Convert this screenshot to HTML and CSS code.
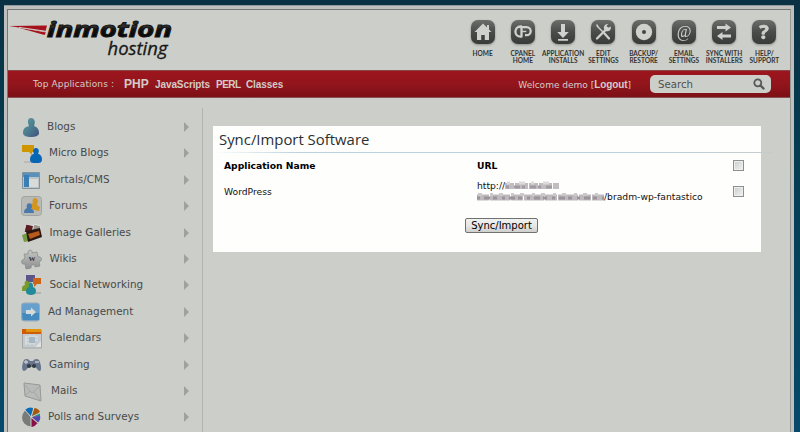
FILE: index.html
```html
<!DOCTYPE html>
<html lang="en">
<head>
<meta charset="utf-8">
<title>Sync/Import Software</title>
<link rel="stylesheet" href="styles.css">
</head>
<body>
<svg width="0" height="0" class="defs">
  <defs>
    <linearGradient id="tile" x1="0" y1="0" x2="0" y2="1"><stop offset="0" stop-color="#6c6e6b"/><stop offset=".5" stop-color="#4a4c4a"/><stop offset="1" stop-color="#393b39"/></linearGradient>
    <linearGradient id="ink" x1="0" y1="0" x2="0" y2="1"><stop offset="0" stop-color="#101010"/><stop offset=".45" stop-color="#333"/><stop offset=".55" stop-color="#111"/><stop offset="1" stop-color="#000"/></linearGradient>
    <linearGradient id="user" x1="0" y1="0" x2="1" y2="1"><stop offset="0" stop-color="#659a9d"/><stop offset=".5" stop-color="#4b7e90"/><stop offset="1" stop-color="#434f7c"/></linearGradient>
    <linearGradient id="metal" x1="0" y1="0" x2="0" y2="1"><stop offset="0" stop-color="#c5c6c4"/><stop offset="1" stop-color="#8d9090"/></linearGradient>
  </defs>
</svg>
<div class="frame">
<div class="page">
  <header class="top">
    <svg class="logo" width="172" height="54" viewBox="0 0 172 54">
      <path d="M0 12 38 11.500 36.500 17.500Z" fill="#a5121b"/>
      <path d="M8 13.300 37 18.500 35.500 21Z" fill="#a5121b"/>
      <path d="M10 13.400 37 17.300" stroke="#cccec9" stroke-width="1"/>
      <text x="38" y="22.500" class="brand" textLength="125" lengthAdjust="spacingAndGlyphs">inmotion</text>
      <text x="98.500" y="40.500" class="brand2" textLength="60" lengthAdjust="spacingAndGlyphs">hosting</text>
    </svg>
    <nav class="tools">
      <a><svg viewBox="0 0 24 24"><rect width="24" height="24" rx="7" fill="url(#tile)"/><path d="M12 3.500 3.500 12H6v8h4.200v-5h3.600v5H18v-8h2.500L18 9.500V5h-2v2.500Z" fill="#cfd1cc"/></svg><span>HOME</span></a>
      <a><svg viewBox="0 0 24 24"><rect width="24" height="24" rx="7" fill="url(#tile)"/><path d="M11 6.500H9.500a5 5 0 0 0 0 10.200h1.800M10.500 16.700V7.200h5.200a4 4 0 0 1 0 8H14" fill="none" stroke="#cfd1cc" stroke-width="2.300"/><path d="M10.800 11.500h4.500" stroke="#cfd1cc" stroke-width="1.400"/></svg><span>CPANEL<br>HOME</span></a>
      <a><svg viewBox="0 0 24 24"><rect width="24" height="24" rx="7" fill="url(#tile)"/><path d="M10 4h4v8h3.800L12 18l-5.800-6H10ZM7 19h10v1.700H7Z" fill="#cfd1cc"/></svg><span>APPLICATION<br>INSTALLS</span></a>
      <a><svg viewBox="0 0 24 24"><rect width="24" height="24" rx="7" fill="url(#tile)"/><path d="m6 6 6 6" stroke="#cfd1cc" stroke-width="1.400"/><path d="m13.500 13.500 4.500 5M6 18.500 16.500 8" stroke="#cfd1cc" stroke-width="2.300" stroke-linecap="round"/><path d="M19.800 6.500A3.600 3.600 0 1 1 17 4.100l-1.500 2.200 1.600 1.800ZM4.500 5l2-.8 1.500 3Z" fill="#cfd1cc"/></svg><span>EDIT<br>SETTINGS</span></a>
      <a><svg viewBox="0 0 24 24"><rect width="24" height="24" rx="7" fill="url(#tile)"/><circle cx="12" cy="12" r="8.200" fill="#cfd1cc"/><circle cx="12" cy="12" r="2" fill="#444"/></svg><span>BACKUP/<br>RESTORE</span></a>
      <a><svg viewBox="0 0 24 24"><rect width="24" height="24" rx="7" fill="url(#tile)"/><text x="12" y="16.500" text-anchor="middle" class="at">@</text></svg><span>EMAIL<br>SETTINGS</span></a>
      <a><svg viewBox="0 0 24 24"><rect width="24" height="24" rx="7" fill="url(#tile)"/><path d="M5 6h8.500V3.500L19 7.500l-5.500 4V9H5ZM19 14.500h-8.500V12L5 16l5.500 4v-2.500H19Z" fill="#cfd1cc"/></svg><span>SYNC WITH<br>INSTALLERS</span></a>
      <a><svg viewBox="0 0 24 24"><rect width="24" height="24" rx="7" fill="url(#tile)"/><text x="12" y="19" text-anchor="middle" class="qm">?</text></svg><span>HELP/<br>SUPPORT</span></a>
    </nav>
  </header>
  <div class="bar">
    <span class="apps">Top Applications :</span>
    <b class="php">PHP</b><b class="js">JavaScripts</b><b class="perl">PERL</b><b class="cls">Classes</b>
    <span class="welcome">Welcome demo [<b>Logout</b>]</span>
    <div class="search"><span>Search</span>
      <svg width="12" height="12" viewBox="0 0 12 12"><circle cx="4.800" cy="4.800" r="3.500" fill="none" stroke="#555957" stroke-width="1.800"/><path d="m7.500 7.500 3 3" stroke="#555957" stroke-width="2.400" stroke-linecap="round"/></svg>
    </div>
  </div>
  <div class="body">
    <nav class="side">
      <a class="n0"><svg viewBox="0 0 22 22"><path d="M2 17c0-5 3-6 6-7-2-5-1-8 2-8s5 3 3 8c3 1 5 3 5 7 0 3-4 4-8 4s-8-1-8-4Z" fill="url(#user)"/></svg><span>Blogs</span><i></i></a>
      <a class="n2"><svg viewBox="0 0 22 22"><path d="M3 20h12" stroke="#aaa"/><path d="M1 3h12v7h-2v3L8 10H1Z" fill="#cf9600"/><path d="M9 17c0-3 2-5 4-5-2-4 0-6 2-6s4 2 2 6c2 0 4 2 4 5 0 4-2 4-6 4s-6 0-6-4Z" fill="#0867b4"/></svg><span>Micro Blogs</span><i></i></a>
      <a class="n1"><svg viewBox="0 0 22 22"><path d="M1.500 3.500h17v16h-17Z" fill="#b9c3c8" stroke="#8094a0"/><path d="M2 4h16v4H2Z" fill="#5a91bb"/><path d="M3 6h5v12H3Z" fill="#397eb4"/><path d="M8 10h9v8H8Z" fill="#d9dbd9"/></svg><span>Portals/CMS</span><i></i></a>
      <a class="n2"><svg viewBox="0 0 22 22"><rect x=".5" y="1.500" width="20" height="19" rx="3" fill="#b8bab7" stroke="#a2a4a2"/><path d="M9 14V9l3-1c-2-5 4-7 5-2l-1 4 3 2-1 4Z" fill="#d39620"/><path d="M3 18c0-3 1-4 3-5-2-5 5-7 5-1l-1 2c2 0 3 2 3 4Z" fill="#4778ae"/></svg><span>Forums</span><i></i></a>
      <a class="n3"><svg viewBox="0 0 22 22"><path d="m5 2 9 2-2 9-9-3Z" fill="#5d1d20" stroke="#ddd"/><path d="m13 2 7 2-2 8-7-2Z" fill="#9c9790" stroke="#e2e2de"/><path d="m1 13 5-2 2 8-5 1Z" fill="#739c3f"/><path d="m5 9 14-3 2 9-14 5Z" fill="#2a1712"/><path d="m7 12 11-3 1 4-10 4Z" fill="#b65a1d"/></svg><span>Image Galleries</span><i></i></a>
      <a class="n3"><svg viewBox="0 0 22 22"><path d="M3 6h4c-1-5 5-5 4-1l5-1 1 5c4-1 5 4 1 5l1 4-5 1c0-3-4-3-4 1l-5 1-1-5c-4 1-5-4-1-5l1-1Z" fill="url(#metal)" stroke="#858887" stroke-width=".7"/><text x="11" y="13" text-anchor="middle" class="w">W</text></svg><span>Wikis</span><i></i></a>
      <a class="n3"><svg viewBox="0 0 22 22"><path d="M5 1h9v7H9l-3 3V8H5Z" fill="#5b5688"/><path d="M12 4h8v6h-4l-3 3v-3h-1Z" fill="#cb6518"/><path d="M1 16c0-5 1-4 3-5-2-5 5-6 4 0l2 1v5H1Z" fill="#7a9b26"/><path d="M5 18c0-4 1-4 3-5-2-6 5-6 4 0 3 1 3 3 3 5 0 4-10 4-10 0Z" fill="#218b99"/><path d="M14 19h6" stroke="#999"/></svg><span>Social Networking</span><i></i></a>
      <a class="n1"><svg viewBox="0 0 22 22"><rect x=".5" y="2" width="18" height="18" rx="2.500" fill="#67a0cd" stroke="#99abb6"/><path d="M1 12h17v7H2Z" fill="#458abf"/><path d="M5 9h5V6.500l5 4.500-5 4.500V13H5Z" fill="#d5dad9"/></svg><span>Ad Management</span><i></i></a>
      <a class="n2"><svg viewBox="0 0 22 22"><path d="M1.500 3h19v18h-19Z" fill="#c4cbd0" stroke="#a2a6a7"/><path d="M1 2h19v5H1Z" fill="#cf5a0a"/><path d="M5 2h15v3H5Z" fill="#e2940c"/><path d="M4 10h13M4 13h13M4 16h10M5 9v9M9 8v10M13 8v10" stroke="#dfe1df"/><path d="M8 10h6v6H8Z" fill="#a3b7c5"/><path d="m14 20 6-6v6Z" fill="#e1e1dd"/></svg><span>Calendars</span><i></i></a>
      <a class="n2"><svg viewBox="0 0 22 22"><path d="M3 6c2-2 5-1 6 1h3c1-2 4-3 6-1 2 4 3 10 1 11-2 0-3-3-5-4H8c-2 1-3 4-5 4-3-1-2-7 0-11Z" fill="#66758b"/><path d="M3 8h4M5 6v4M14 8h4" stroke="#c1c7cc" stroke-width="1.300"/><circle cx="8" cy="12" r="2" fill="#303944"/><circle cx="13" cy="12" r="2" fill="#303944"/></svg><span>Gaming</span><i></i></a>
      <a class="n4"><svg viewBox="0 0 22 22"><path d="m3 3 16 2 1 16-16-5Z" fill="#b9bbb9" stroke="#969996"/><path d="m3 4 8 9 8-7M4 16l5-5m4 1 6 8" fill="none" stroke="#a4a7a4"/></svg><span>Mails</span><i></i></a>
      <a class="n1"><svg viewBox="0 0 22 22"><circle cx="10" cy="11.500" r="9" fill="#777b79"/><path d="M10 10 4 4c3-3 6-3 8-2Z" fill="#086cb8"/><path d="m11 10 2-8c3 0 5 2 6 4Z" fill="#a55808"/><path d="m11 10 8-3v3Z" fill="#248c88"/><path d="m11 11 8-1c1 3-1 5-2 6Z" fill="#5345b6"/><path d="m10 12 6 5c-2 3-4 4-6 4Z" fill="#8e0c48"/><path d="M10 11 4 4m6 7v10m0-10 3-9m-3 9 7 6m-7-6 9-4" stroke="#d6d8d4" stroke-width=".9"/></svg><span>Polls and Surveys</span><i></i></a>
    </nav>
    <main>
      <section class="panel">
        <h1>Sync/Import Software</h1>
        <div class="rule"></div>
        <div class="row head"><span>Application Name</span><span>URL</span><em></em></div>
        <div class="row"><span>WordPress</span>
          <div class="url">
            <div>http://<svg width="54" height="10" viewBox="0 0 54 10"><g class="mosaic"><path d="M0 5H54" stroke="#c0bcbf" stroke-width="6" stroke-dasharray="9 1 13 1"/><path d="M2 2H50" stroke="#dedadc" stroke-width="3" stroke-dasharray="3 9 6 6"/><path d="M1 6H49" stroke="#a39ba3" stroke-width="3" stroke-dasharray="3 5 6 2"/></g></svg></div>
            <div><svg width="127" height="10" viewBox="0 0 127 10"><g class="mosaic"><path d="M0 5.500H127" stroke="#bdb9bc" stroke-width="6" stroke-dasharray="12 1 20 1"/><path d="M1 2.500H127" stroke="#cdc8ca" stroke-width="3" stroke-dasharray="4 8 3 6"/><path d="M0 6H127" stroke="#9b949b" stroke-width="3" stroke-dasharray="3 4 6 3 4 5"/></g></svg>/bradm-wp-fantastico</div>
          </div><em></em></div>
        <button>Sync/Import</button>
      </section>
    </main>
  </div>
</div>
</div>
</body>
</html>
```

FILE: styles.css
```css
* { box-sizing: border-box; }
body {
  margin: 0;
  height: 432px;
  overflow: hidden;
  padding: 5px 6px 0 4px;
  background: linear-gradient(#0a3143, #053c51 35%, #06496a);
  font-family: "DejaVu Sans", sans-serif;
  color: #484a49;
}
.defs { display: block; height: 0; }
.frame {
  height: 427px;
  padding: 4px 3px 0;
  background: #bfc0be;
  border-top: 1px solid #93999a;
}
.page {
  height: 423px;
  border: 1px solid #737775;
  border-right-color: #969996;
  border-bottom: 0;
  background: #cccec9;
  margin-top: -1px;
}
.top { height: 60px; display: flex; justify-content: space-between; }
.logo { margin: 4px 0 0 1px; flex: none; overflow: visible; }
.brand { font: italic bold 22px "Open Sans", sans-serif; fill: url(#ink); stroke: #151515; stroke-width: 1px; }
.brand2 { font: italic 18.500px "Open Sans", sans-serif; fill: #171817; stroke: #171817; stroke-width: .3px; }
.tools { display: grid; grid-template-columns: repeat(8, 40.250px); padding-top: 10px; margin-right: 5.500px; }
.tools a { display: flex; flex-direction: column; align-items: center; }
.tools svg { width: 24px; height: 24px; flex: none; overflow: visible; filter: drop-shadow(0 1px 1px #8a8c89); }
.tools span {
  margin-top: 6px;
  font: bold 6.500px/7px Lato, sans-serif;
  color: #333433;
  text-align: center;
  white-space: nowrap;
}
.at { font: 16px "Liberation Serif", serif; fill: #cfd1cc; }
.qm { font: bold 20px "Open Sans", sans-serif; fill: #cfd1cc; stroke: #cfd1cc; stroke-width: .6px; }
.w { font: bold 7px "Liberation Serif", serif; fill: #2e3030; }
.bar {
  height: 28px;
  display: flex;
  align-items: center;
  padding-left: 25px;
  background: linear-gradient(#9d151e, #93151c 50%, #7c1016);
  border-top: 1px solid #8a4546;
  border-bottom: 1px solid #875353;
  color: #d3cbc8;
  font-size: 9px;
  white-space: nowrap;
}
.bar b { font-family: "Liberation Sans", sans-serif; }
.apps { width: 91px; letter-spacing: .12px; }
.bar .php { width: 31px; font-size: 12px; }
.bar .js { width: 61px; font-size: 10px; letter-spacing: -.1px; }
.bar .perl { width: 30px; font-size: 10px; letter-spacing: -.5px; }
.bar .cls { width: 47px; font-size: 10px; letter-spacing: -.1px; }
.welcome { margin-left: auto; margin-right: 19px; }
.bar .welcome b { font-size: 10px; letter-spacing: -.1px; }
.search {
  width: 121px; height: 18px;
  margin-right: 19px;
  padding: 0 6px 0 8px;
  border-radius: 5px;
  background: #cccec9;
  color: #4e5150;
  display: flex;
  align-items: center;
  justify-content: space-between;
  font-size: 10.200px;
}
.body { display: flex; height: 334px; }
.side { width: 195px; height: 324px; margin-top: 10px; padding-top: 5.300px; border-right: 1px solid #b2b4b0; }
.side a { height: 26.400px; display: flex; align-items: center; padding-left: 13px; }
.side svg { width: 22px; height: 22px; flex: none; margin-top: 1px; overflow: visible; }
.side span { font-size: 10.400px; margin: 0 0 1px 4px; line-height: 14px; white-space: nowrap; }
.side .n1 span { margin-left: 5px; }
.side .n2 span { margin-left: 6px; }
.side .n3 span { margin-left: 6.500px; }
.side .n4 span { margin-left: 8px; }
.side i { margin-left: auto; margin-right: 13px; margin-top: 1px; border: 5px solid transparent; border-left-color: #9fa19e; border-right: 0; }
main { padding: 28px 0 0 10px; }
.panel { width: 548px; height: 126px; background: #fefefd; color: #111; font-size: 9.200px; }
h1 { margin: 0; padding: 3px 0 0 6px; height: 26px; font: 14.900px/20px "Open Sans", sans-serif; color: #2b3032; white-space: nowrap; }
.rule { width: 560px; height: 1px; background: linear-gradient(90deg, #fefefd, #bbd2df 15%, #bbd2df 75%, #c6cbcb); }
.row { height: 26px; display: grid; grid-template-columns: 253px 256px 11px; padding: 0 0 2px 11px; align-items: center; line-height: 11px; }
.head { font-weight: bold; color: #000; }
.row em { width: 11px; height: 11px; border: 1px solid #8b8f90; background: linear-gradient(135deg, #c6cccf, #f3f3f2); box-shadow: inset 0 0 0 1px #eeeeed; }
.url { white-space: nowrap; }
.url div { height: 11px; }
.url svg { vertical-align: -2px; }
.mosaic { filter: blur(.6px); }
button {
  display: block;
  width: 73px; height: 15px;
  margin: 13px 0 0 252px;
  padding: 0;
  border: 1px solid #707271;
  border-radius: 2px;
  background: linear-gradient(#f1f1f0, #e7e7e5 50%, #cfcfcd);
  font: 10px/12px "DejaVu Sans", sans-serif;
  color: #000;
}
```
